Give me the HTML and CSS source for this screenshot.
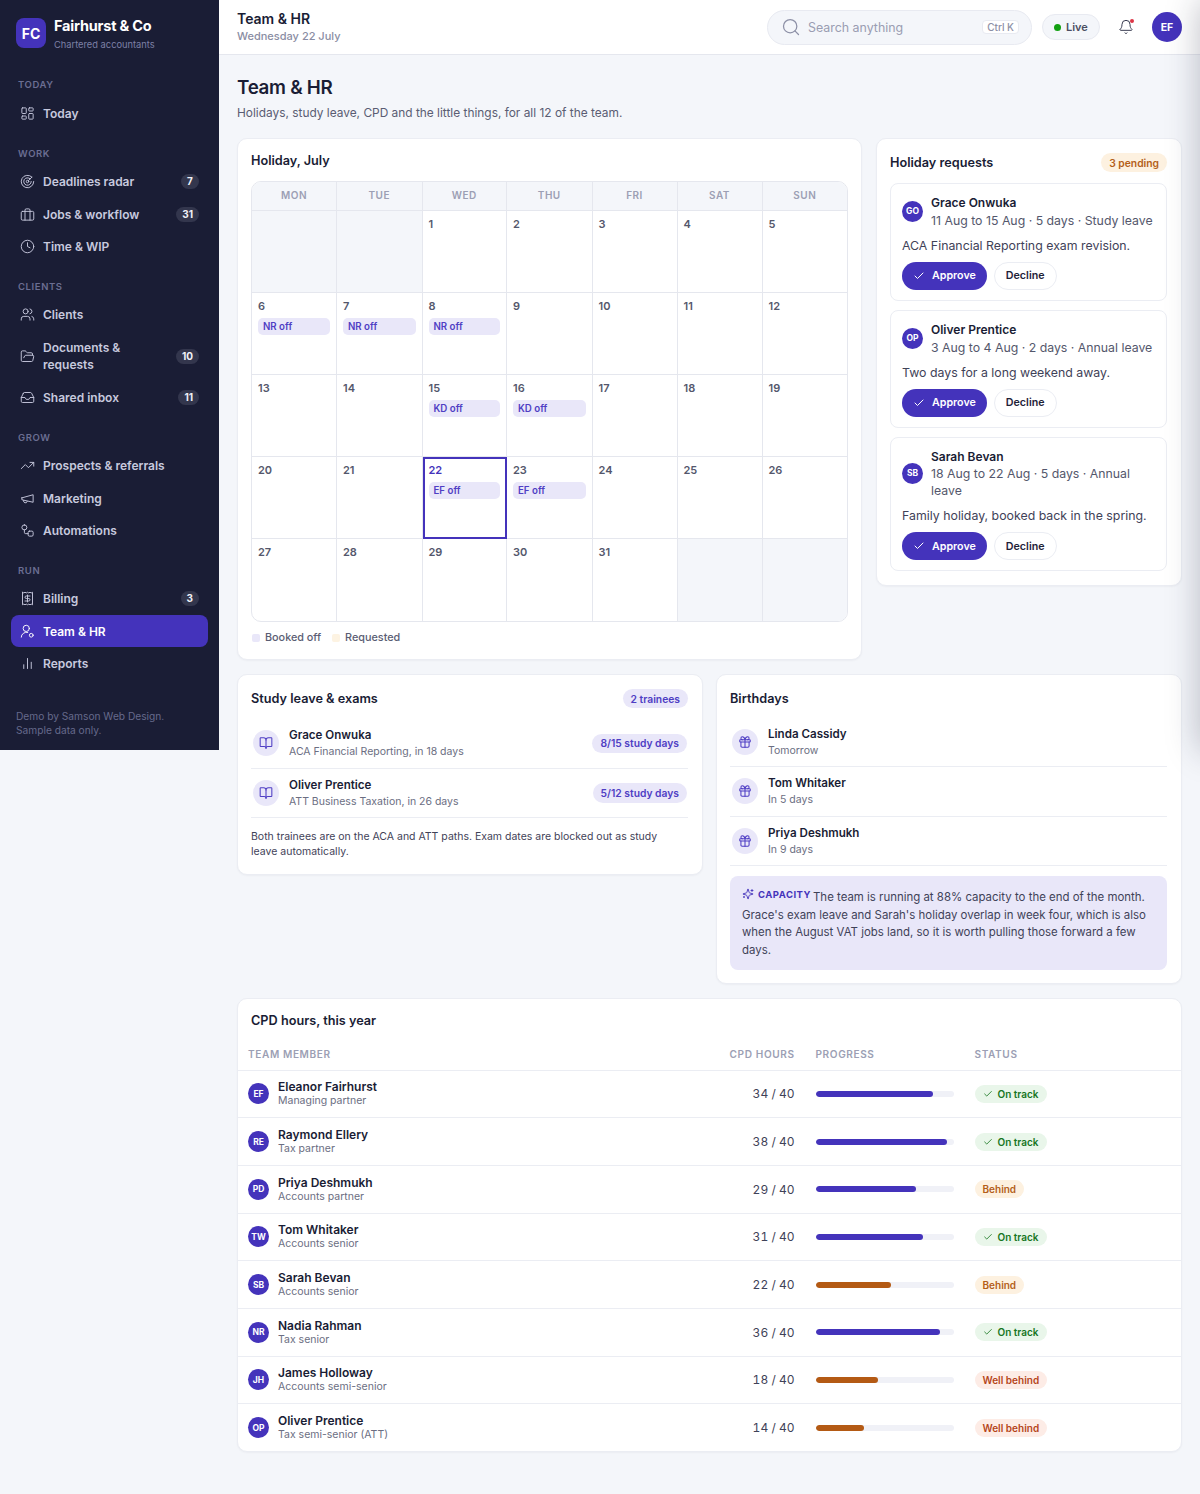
FILE: index.html
```html
<!DOCTYPE html>
<html lang="en">
<head>
<meta charset="utf-8">
<title>Team &amp; HR</title>
<link rel="stylesheet" href="styles.css">
</head>
<body>
<div class="app">
<aside class="sidebar">
  <div class="brand">
    <div class="logo">FC</div>
    <div class="brand-text"><div class="brand-name">Fairhurst &amp; Co</div><div class="brand-sub">Chartered accountants</div></div>
  </div>
  <nav class="nav">
    <div class="nav-label first">TODAY</div>
    <a class="nav-item"><svg class="ic" viewBox="0 0 24 24"><rect x="3" y="3" width="7" height="9" rx="1"/><rect x="14" y="3" width="7" height="5" rx="1"/><rect x="14" y="12" width="7" height="9" rx="1"/><rect x="3" y="16" width="7" height="5" rx="1"/></svg><span>Today</span></a>
    <div class="nav-label">WORK</div>
    <a class="nav-item"><svg class="ic" viewBox="0 0 24 24"><path d="M19.07 4.93A10 10 0 1 0 22 12"/><path d="M16.24 7.76A6 6 0 1 0 18 12"/><circle cx="12" cy="12" r="2"/><path d="M13.4 10.6 19 5"/></svg><span>Deadlines radar</span><b class="count">7</b></a>
    <a class="nav-item"><svg class="ic" viewBox="0 0 24 24"><rect x="2" y="7" width="20" height="14" rx="2"/><path d="M16 21V5a2 2 0 0 0-2-2h-4a2 2 0 0 0-2 2v16"/></svg><span>Jobs &amp; workflow</span><b class="count">31</b></a>
    <a class="nav-item"><svg class="ic" viewBox="0 0 24 24"><circle cx="12" cy="12" r="10"/><path d="M12 6v6l4 2"/></svg><span>Time &amp; WIP</span></a>
    <div class="nav-label">CLIENTS</div>
    <a class="nav-item"><svg class="ic" viewBox="0 0 24 24"><circle cx="9" cy="7" r="4"/><path d="M2 21v-2a4 4 0 0 1 4-4h6a4 4 0 0 1 4 4v2"/><path d="M16 3.1a4 4 0 0 1 0 7.8"/><path d="M22 21v-2a4 4 0 0 0-3-3.9"/></svg><span>Clients</span></a>
    <a class="nav-item tall"><svg class="ic" viewBox="0 0 24 24"><path d="m6 14 1.5-2.9A2 2 0 0 1 9.2 10H20a2 2 0 0 1 1.9 2.5l-1.5 6a2 2 0 0 1-2 1.5H4a2 2 0 0 1-2-2V5a2 2 0 0 1 2-2h3.9a2 2 0 0 1 1.7.9l.8 1.2a2 2 0 0 0 1.7.9H18a2 2 0 0 1 2 2v2"/></svg><span>Documents &amp; requests</span><b class="count">10</b></a>
    <a class="nav-item"><svg class="ic" viewBox="0 0 24 24"><path d="M22 12h-6l-2 3h-4l-2-3H2"/><path d="M5.5 5.1 2 12v6a2 2 0 0 0 2 2h16a2 2 0 0 0 2-2v-6l-3.5-6.9A2 2 0 0 0 16.8 4H7.2a2 2 0 0 0-1.7 1.1z"/></svg><span>Shared inbox</span><b class="count">11</b></a>
    <div class="nav-label">GROW</div>
    <a class="nav-item"><svg class="ic" viewBox="0 0 24 24"><path d="m22 7-8.5 8.5-5-5L2 17"/><path d="M16 7h6v6"/></svg><span>Prospects &amp; referrals</span></a>
    <a class="nav-item"><svg class="ic" viewBox="0 0 24 24"><path d="m3 11 18-5v12L3 14v-3z"/><path d="M11.6 16.8a3 3 0 1 1-5.8-1.6"/></svg><span>Marketing</span></a>
    <a class="nav-item"><svg class="ic" viewBox="0 0 24 24"><rect x="3" y="3" width="8" height="8" rx="4"/><rect x="13" y="13" width="8" height="8" rx="2"/><path d="M7 11v4a2 2 0 0 0 2 2h4"/></svg><span>Automations</span></a>
    <div class="nav-label">RUN</div>
    <a class="nav-item"><svg class="ic" viewBox="0 0 24 24"><path d="M4 2v20l2-1 2 1 2-1 2 1 2-1 2 1 2-1 2 1V2l-2 1-2-1-2 1-2-1-2 1-2-1-2 1Z"/><path d="M16 8h-6a2 2 0 1 0 0 4h4a2 2 0 1 1 0 4H8"/><path d="M12 17.5v-11"/></svg><span>Billing</span><b class="count">3</b></a>
    <a class="nav-item active"><svg class="ic" viewBox="0 0 24 24"><circle cx="10" cy="7" r="5"/><path d="M2 21a8 8 0 0 1 10.4-7.6"/><circle cx="18" cy="18" r="3"/></svg><span>Team &amp; HR</span></a>
    <a class="nav-item"><svg class="ic" viewBox="0 0 24 24"><path d="M18 20V10M12 20V4M6 20v-6"/></svg><span>Reports</span></a>
  </nav>
  <div class="demo">Demo by Samson Web Design.<br>Sample data only.</div>
</aside>
<div class="main">
  <header class="topbar">
    <div><div class="top-title">Team &amp; HR</div><div class="top-sub">Wednesday 22 July</div></div>
    <div class="top-tools">
      <div class="search"><svg class="search-ic" viewBox="0 0 24 24"><circle cx="11" cy="11" r="8"/><path d="m21 21-4.3-4.3"/></svg><span class="search-text">Search anything</span><kbd class="kbd">Ctrl K</kbd></div>
      <div class="live"><i class="dot"></i>Live</div>
      <div class="bell"><svg viewBox="0 0 24 24"><path d="M10.3 21a2 2 0 0 0 3.4 0"/><path d="M3.3 15.3A1 1 0 0 0 4 17h16a1 1 0 0 0 .7-1.7C19.4 14 18 12.5 18 8A6 6 0 0 0 6 8c0 4.5-1.4 6-2.7 7.3"/></svg><i class="bell-dot"></i></div>
      <div class="avatar big">EF</div>
    </div>
  </header>
  <main class="content">
    <h1 class="page-title">Team &amp; HR</h1>
    <p class="page-sub">Holidays, study leave, CPD and the little things, for all 12 of the team.</p>
    <div class="row-top">
      <section class="card cal-card">
        <h2 class="card-title">Holiday, July</h2>
        <div class="calendar">
          <div class="dow">MON</div><div class="dow">TUE</div><div class="dow">WED</div><div class="dow">THU</div><div class="dow">FRI</div><div class="dow">SAT</div><div class="dow">SUN</div>
          <div class="day off"></div><div class="day off"></div><div class="day">1</div><div class="day">2</div><div class="day">3</div><div class="day">4</div><div class="day">5</div>
          <div class="day">6<span class="chip">NR off</span></div><div class="day">7<span class="chip">NR off</span></div><div class="day">8<span class="chip">NR off</span></div><div class="day">9</div><div class="day">10</div><div class="day">11</div><div class="day">12</div>
          <div class="day">13</div><div class="day">14</div><div class="day">15<span class="chip">KD off</span></div><div class="day">16<span class="chip">KD off</span></div><div class="day">17</div><div class="day">18</div><div class="day">19</div>
          <div class="day">20</div><div class="day">21</div><div class="day today">22<span class="chip">EF off</span></div><div class="day">23<span class="chip">EF off</span></div><div class="day">24</div><div class="day">25</div><div class="day">26</div>
          <div class="day">27</div><div class="day">28</div><div class="day">29</div><div class="day">30</div><div class="day">31</div><div class="day off"></div><div class="day off"></div>
        </div>
        <div class="legend"><span class="leg"><i class="sw booked"></i>Booked off</span><span class="leg"><i class="sw requested"></i>Requested</span></div>
      </section>
      <section class="card req-card">
        <div class="card-head"><h2 class="card-title">Holiday requests</h2><span class="pill amber">3 pending</span></div>
        <div class="req-list">
          <div class="req">
            <div class="req-top"><div class="avatar">GO</div><div><div class="req-name">Grace Onwuka</div><div class="req-meta">11 Aug to 15 Aug · 5 days · Study leave</div></div></div>
            <p class="req-note">ACA Financial Reporting exam revision.</p>
            <div class="req-btns"><button class="btn approve"><svg viewBox="0 0 24 24"><path d="M20 6 9 17l-5-5"/></svg>Approve</button><button class="btn decline">Decline</button></div>
          </div>
          <div class="req">
            <div class="req-top"><div class="avatar">OP</div><div><div class="req-name">Oliver Prentice</div><div class="req-meta">3 Aug to 4 Aug · 2 days · Annual leave</div></div></div>
            <p class="req-note">Two days for a long weekend away.</p>
            <div class="req-btns"><button class="btn approve"><svg viewBox="0 0 24 24"><path d="M20 6 9 17l-5-5"/></svg>Approve</button><button class="btn decline">Decline</button></div>
          </div>
          <div class="req">
            <div class="req-top"><div class="avatar">SB</div><div><div class="req-name">Sarah Bevan</div><div class="req-meta">18 Aug to 22 Aug · 5 days · Annual leave</div></div></div>
            <p class="req-note">Family holiday, booked back in the spring.</p>
            <div class="req-btns"><button class="btn approve"><svg viewBox="0 0 24 24"><path d="M20 6 9 17l-5-5"/></svg>Approve</button><button class="btn decline">Decline</button></div>
          </div>
        </div>
      </section>
    </div>
    <div class="row-mid">
      <section class="card study-card">
        <div class="card-head"><h2 class="card-title">Study leave &amp; exams</h2><span class="pill violet">2 trainees</span></div>
        <div class="li">
          <div class="li-ic"><svg viewBox="0 0 24 24"><path d="M12 7v14"/><path d="M3 18a1 1 0 0 1-1-1V4a1 1 0 0 1 1-1h5a4 4 0 0 1 4 4 4 4 0 0 1 4-4h5a1 1 0 0 1 1 1v13a1 1 0 0 1-1 1h-6a3 3 0 0 0-3 3 3 3 0 0 0-3-3z"/></svg></div>
          <div class="li-body"><div class="li-name">Grace Onwuka</div><div class="li-sub">ACA Financial Reporting, in 18 days</div></div>
          <span class="pill violet">8/15 study days</span>
        </div>
        <div class="li">
          <div class="li-ic"><svg viewBox="0 0 24 24"><path d="M12 7v14"/><path d="M3 18a1 1 0 0 1-1-1V4a1 1 0 0 1 1-1h5a4 4 0 0 1 4 4 4 4 0 0 1 4-4h5a1 1 0 0 1 1 1v13a1 1 0 0 1-1 1h-6a3 3 0 0 0-3 3 3 3 0 0 0-3-3z"/></svg></div>
          <div class="li-body"><div class="li-name">Oliver Prentice</div><div class="li-sub">ATT Business Taxation, in 26 days</div></div>
          <span class="pill violet">5/12 study days</span>
        </div>
        <p class="study-note">Both trainees are on the ACA and ATT paths. Exam dates are blocked out as study leave automatically.</p>
      </section>
      <section class="card bday-card">
        <div class="card-head"><h2 class="card-title">Birthdays</h2></div>
        <div class="li">
          <div class="li-ic"><svg viewBox="0 0 24 24"><rect x="3" y="8" width="18" height="4" rx="1"/><path d="M12 8v13"/><path d="M19 12v7a2 2 0 0 1-2 2H7a2 2 0 0 1-2-2v-7"/><path d="M7.5 8a2.5 2.5 0 0 1 0-5A4.8 8 0 0 1 12 8a4.8 8 0 0 1 4.5-5 2.5 2.5 0 0 1 0 5"/></svg></div>
          <div class="li-body"><div class="li-name">Linda Cassidy</div><div class="li-sub">Tomorrow</div></div>
        </div>
        <div class="li">
          <div class="li-ic"><svg viewBox="0 0 24 24"><rect x="3" y="8" width="18" height="4" rx="1"/><path d="M12 8v13"/><path d="M19 12v7a2 2 0 0 1-2 2H7a2 2 0 0 1-2-2v-7"/><path d="M7.5 8a2.5 2.5 0 0 1 0-5A4.8 8 0 0 1 12 8a4.8 8 0 0 1 4.5-5 2.5 2.5 0 0 1 0 5"/></svg></div>
          <div class="li-body"><div class="li-name">Tom Whitaker</div><div class="li-sub">In 5 days</div></div>
        </div>
        <div class="li">
          <div class="li-ic"><svg viewBox="0 0 24 24"><rect x="3" y="8" width="18" height="4" rx="1"/><path d="M12 8v13"/><path d="M19 12v7a2 2 0 0 1-2 2H7a2 2 0 0 1-2-2v-7"/><path d="M7.5 8a2.5 2.5 0 0 1 0-5A4.8 8 0 0 1 12 8a4.8 8 0 0 1 4.5-5 2.5 2.5 0 0 1 0 5"/></svg></div>
          <div class="li-body"><div class="li-name">Priya Deshmukh</div><div class="li-sub">In 9 days</div></div>
        </div>
        <div class="insight"><span class="insight-tag"><svg viewBox="0 0 24 24"><path d="M9.9 15.5A2 2 0 0 0 8.5 14.1l-6.1-1.6a.5.5 0 0 1 0-1l6.100-1.600a2 2 0 0 0 1.400-1.400l1.600-6.100a.5.5 0 0 1 1 0l1.600 6.100a2 2 0 0 0 1.400 1.400l6.100 1.600a.5.5 0 0 1 0 1l-6.100 1.600a2 2 0 0 0-1.400 1.400l-1.600 6.100a.5.5 0 0 1-1 0z"/><path d="M20 3v4M22 5h-4M4 17v2M5 18H3"/></svg>CAPACITY</span>The team is running at 88% capacity to the end of the month. Grace's exam leave and Sarah's holiday overlap in week four, which is also when the August VAT jobs land, so it is worth pulling those forward a few days.</div>
      </section>
    </div>
    <section class="card cpd-card">
      <h2 class="card-title cpd-title">CPD hours, this year</h2>
      <table class="cpd">
        <colgroup><col class="c1"><col class="c2"><col class="c3"><col class="c4"></colgroup>
        <thead><tr><th>TEAM MEMBER</th><th class="num">CPD HOURS</th><th>PROGRESS</th><th>STATUS</th></tr></thead>
        <tbody>
          <tr><td><div class="who"><div class="avatar">EF</div><div><div class="who-name">Eleanor Fairhurst</div><div class="who-role">Managing partner</div></div></div></td><td class="num">34 / 40</td><td><div class="bar"><i style="width:85%"></i></div></td><td><span class="status ok"><svg viewBox="0 0 24 24"><path d="M20 6 9 17l-5-5"/></svg>On track</span></td></tr>
          <tr><td><div class="who"><div class="avatar">RE</div><div><div class="who-name">Raymond Ellery</div><div class="who-role">Tax partner</div></div></div></td><td class="num">38 / 40</td><td><div class="bar"><i style="width:95%"></i></div></td><td><span class="status ok"><svg viewBox="0 0 24 24"><path d="M20 6 9 17l-5-5"/></svg>On track</span></td></tr>
          <tr><td><div class="who"><div class="avatar">PD</div><div><div class="who-name">Priya Deshmukh</div><div class="who-role">Accounts partner</div></div></div></td><td class="num">29 / 40</td><td><div class="bar"><i style="width:73%"></i></div></td><td><span class="status warn">Behind</span></td></tr>
          <tr><td><div class="who"><div class="avatar">TW</div><div><div class="who-name">Tom Whitaker</div><div class="who-role">Accounts senior</div></div></div></td><td class="num">31 / 40</td><td><div class="bar"><i style="width:78%"></i></div></td><td><span class="status ok"><svg viewBox="0 0 24 24"><path d="M20 6 9 17l-5-5"/></svg>On track</span></td></tr>
          <tr><td><div class="who"><div class="avatar">SB</div><div><div class="who-name">Sarah Bevan</div><div class="who-role">Accounts senior</div></div></div></td><td class="num">22 / 40</td><td><div class="bar low"><i style="width:55%"></i></div></td><td><span class="status warn">Behind</span></td></tr>
          <tr><td><div class="who"><div class="avatar">NR</div><div><div class="who-name">Nadia Rahman</div><div class="who-role">Tax senior</div></div></div></td><td class="num">36 / 40</td><td><div class="bar"><i style="width:90%"></i></div></td><td><span class="status ok"><svg viewBox="0 0 24 24"><path d="M20 6 9 17l-5-5"/></svg>On track</span></td></tr>
          <tr><td><div class="who"><div class="avatar">JH</div><div><div class="who-name">James Holloway</div><div class="who-role">Accounts semi-senior</div></div></div></td><td class="num">18 / 40</td><td><div class="bar low"><i style="width:45%"></i></div></td><td><span class="status bad">Well behind</span></td></tr>
          <tr><td><div class="who"><div class="avatar">OP</div><div><div class="who-name">Oliver Prentice</div><div class="who-role">Tax semi-senior (ATT)</div></div></div></td><td class="num">14 / 40</td><td><div class="bar low"><i style="width:35%"></i></div></td><td><span class="status bad">Well behind</span></td></tr>
        </tbody>
      </table>
    </section>
  </main>
</div>
<div class="drawer-shadow"></div>
</div>
</body>
</html>
```
FILE: styles.css
```css
* { box-sizing: border-box; }
html, body { margin: 0; padding: 0; }
body { background: #f4f6fa; font-family: Inter, "Liberation Sans", sans-serif; color: #1a1d35; font-size: 13px; }
p, h1, h2 { margin: 0; }
svg { fill: none; stroke: currentColor; stroke-width: 2; stroke-linecap: round; stroke-linejoin: round; }

.app { position: relative; overflow: hidden; display: flex; align-items: flex-start; width: 1200px; min-height: 1494px; }
.drawer-shadow { position: absolute; left: 100%; top: 0; width: 300px; height: 750px; box-shadow: 0 0 32px rgba(26,29,53,.28); pointer-events: none; }

.sidebar { width: 219px; height: 750px; flex: none; background: #1a1d35; display: flex; flex-direction: column; padding: 18px 11px 0; }
.brand { display: flex; align-items: flex-start; gap: 8px; padding: 0 5px; height: 30px; }
.logo { width: 30px; height: 30px; border-radius: 8px; background: #4433bb; color: #fff; font-weight: 700; font-size: 14px; display: flex; align-items: center; justify-content: center; flex: none; }
.brand-name { color: #fff; font-weight: 700; font-size: 14.5px; line-height: 16px; letter-spacing: -0.2px; }
.brand-sub { color: #7d80a6; font-size: 9.3px; line-height: 15px; margin-top: 2.5px; }
.nav { display: flex; flex-direction: column; gap: 0.5px; }
.nav-label { color: #6b6e92; font-size: 9.5px; font-weight: 600; letter-spacing: 0.6px; line-height: 12px; padding: 0 7px; margin: 18px 0 5px; }
.nav-label.first { margin-top: 31px; margin-bottom: 6px; }
.nav-item { display: flex; align-items: center; height: 32px; padding: 0 9px; gap: 8px; color: #c7c9de; font-size: 12px; font-weight: 600; border-radius: 8px; }
.nav-item span { flex: 1; line-height: 17px; min-width: 0; }
.nav-item.tall { height: 50px; }
.nav-item.active { background: #4433bb; color: #fff; }
.ic { width: 15px; height: 15px; flex: none; stroke-width: 1.5; }
.count { flex: none; background: #33364d; color: #f0f1f8; font-size: 10px; font-weight: 700; line-height: 15px; padding: 0 6px; border-radius: 8px; min-width: 18px; text-align: center; }
.demo { margin-top: 29px; padding: 0 5px; color: #666a8c; font-size: 10.2px; line-height: 14.5px; }

.main { flex: 1; min-width: 0; }
.topbar { height: 55px; background: #fff; border-bottom: 1px solid #e5e7ee; display: flex; align-items: center; justify-content: space-between; padding: 0 18px; }
.top-title { font-size: 14px; font-weight: 600; line-height: 18px; }
.top-sub { font-size: 11px; color: #8a8da3; font-weight: 500; line-height: 15px; margin-top: 1px; }
.top-tools { display: flex; align-items: center; }
.search { width: 265px; height: 35px; background: #f4f6fa; border: 1px solid #e8eaf1; border-radius: 18px; display: flex; align-items: center; padding: 0 12px 0 13px; color: #9a9db2; }
.search-ic { width: 20px; height: 20px; stroke-width: 1.5; color: #8d90a6; flex: none; }
.search-text { flex: 1; margin-left: 7px; font-size: 12.4px; }
.kbd { font-family: Inter, sans-serif; font-size: 10px; font-weight: 500; background: #fff; border: 1px solid #e8eaf1; border-radius: 4px; padding: 0 4px; line-height: 12px; height: 14px; color: #8d90a6; }
.live { margin-left: 10px; height: 26px; width: 58px; background: #f4f6fa; border: 1px solid #e8eaf1; border-radius: 13px; display: flex; align-items: center; gap: 5px; padding-left: 11px; font-size: 11px; font-weight: 600; color: #4b4e63; }
.dot { width: 7px; height: 7px; border-radius: 50%; background: #12a012; }
.bell { position: relative; width: 16px; height: 16px; margin-left: 18px; color: #3a3d52; }
.bell svg { width: 16px; height: 16px; stroke-width: 1.5; display: block; }
.bell-dot { position: absolute; right: 0; top: 0; width: 4px; height: 4px; border-radius: 50%; background: #dc3545; }
.avatar { width: 21px; height: 21px; flex: none; border-radius: 50%; background: #4433bb; color: #fff; font-size: 8.5px; font-weight: 700; display: flex; align-items: center; justify-content: center; }
.avatar.big { width: 30px; height: 30px; font-size: 10.5px; margin-left: 18px; }

.content { padding: 21px 18px 42px; }
.page-title { font-size: 18.8px; font-weight: 600; line-height: 24px; letter-spacing: -0.3px; }
.page-sub { color: #5a5d73; font-size: 11.9px; line-height: 18px; margin-top: 4px; margin-bottom: 16px; }

.card { background: #fff; border: 1px solid #ebedf3; border-radius: 10px; box-shadow: 0 1px 2px rgba(26,29,53,.04); padding: 14px 14px 14px 13px; }
.card-title { font-size: 12.7px; font-weight: 600; line-height: 18px; color: #1a1d35; }
.card-head { display: flex; justify-content: space-between; align-items: center; }

.row-top { display: grid; grid-template-columns: 625px 306px; gap: 14px; align-items: start; }
.cal-card { height: 522px; padding-top: 13px; padding-right: 13px; }
.calendar { margin-top: 11px; display: grid; grid-template-columns: 85px 85.5px 84.5px 85.5px 85px 85px 1fr; border: 1px solid #e5e7ee; border-radius: 10px; overflow: hidden; height: 441px; grid-template-rows: 29px repeat(5, 82px); }
.dow { background: #f4f6fa; border-right: 1px solid #e5e7ee; border-bottom: 1px solid #e5e7ee; color: #9c9fb4; font-size: 10px; font-weight: 600; letter-spacing: 0.5px; display: flex; align-items: center; justify-content: center; padding-bottom: 2px; }
.dow:nth-child(7) { border-right: 0; }
.day { border-right: 1px solid #e5e7ee; border-bottom: 1px solid #e5e7ee; padding: 6px 6px 0; font-size: 11px; font-weight: 600; color: #54576c; line-height: 14px; position: relative; }
.day:nth-child(7n) { border-right: 0; }
.day:nth-last-child(-n+7) { border-bottom: 0; }
.day.off { background: #f4f6fa; }
.day.today { outline: 2px solid #4433bb; outline-offset: -2px; color: #4433bb; }
.chip { display: block; margin-top: 5px; height: 17px; line-height: 17px; background: #e9e7f9; color: #4f3ec4; font-size: 9.7px; font-weight: 600; border-radius: 5px; padding: 0 5px; }
.legend { display: flex; gap: 11px; margin-top: 9px; padding-left: 1px; }
.leg { display: flex; align-items: center; gap: 5px; color: #5a5d73; font-size: 10.8px; font-weight: 500; line-height: 14px; }
.sw { width: 8px; height: 8px; border-radius: 2px; }
.sw.booked { background: #e9e7f9; }
.sw.requested { background: #fdf3e2; }

.pill { display: inline-flex; align-items: center; height: 19.5px; padding: 0 8px; border-radius: 10px; font-size: 10.3px; font-weight: 600; flex: none; }
.pill.amber { background: #fdf1e0; color: #b45f1a; }
.pill.violet { background: #e9e7f9; color: #4f3ec4; }

.req-card { height: 448px; padding-top: 13px; }
.req-card .card-head { height: 21px; }
.req-list { display: flex; flex-direction: column; gap: 9px; margin-top: 10px; }
.req { border: 1px solid #ebedf3; border-radius: 8px; padding: 10px 11px; }
.req-top { display: flex; align-items: center; gap: 8px; }
.req-name { font-size: 12px; font-weight: 600; line-height: 17px; color: #1a1d35; }
.req-meta { font-size: 12.3px; line-height: 17px; color: #54576c; margin-top: 0.75px; }
.req-note { font-size: 12.35px; line-height: 17px; color: #3f4258; margin-top: 8px; }
.req-btns { display: flex; gap: 7px; margin-top: 8px; }
.btn { font-family: inherit; height: 28px; border-radius: 14px; font-size: 10.7px; font-weight: 600; display: inline-flex; align-items: center; }
.btn svg { width: 12px; height: 12px; margin-right: 7px; stroke-width: 2; }
.approve { background: #4433bb; color: #fff; border: 0; padding: 0 11px; }
.decline { background: #fff; color: #1f2238; border: 1px solid #ebedf3; padding: 0 11px; }

.row-mid { display: grid; grid-template-columns: 466px 466px; gap: 13px; align-items: start; margin-top: 14px; }
.study-card { height: 201px; }
.bday-card { height: 310px; }
.study-card .card-head { height: 19px; margin-bottom: 11px; }
.bday-card .card-head { height: 19px; margin-bottom: 9.5px; }
.li { display: flex; align-items: center; gap: 10px; border-bottom: 1px solid #ebedf3; height: 49.5px; padding-left: 2px; }
.li-ic { width: 26px; height: 26px; border-radius: 50%; background: #e9e7f9; color: #4f3ec4; display: flex; align-items: center; justify-content: center; flex: none; }
.li-ic svg { width: 14px; height: 14px; stroke-width: 1.8; }
.li-body { flex: 1; min-width: 0; }
.li-name { font-size: 11.6px; font-weight: 600; line-height: 16px; color: #1a1d35; }
.li-sub { font-size: 10.5px; line-height: 15px; color: #6b6e82; margin-top: 1px; }
.li .pill { margin-right: 1px; }
.study-note { font-size: 10.5px; line-height: 15px; color: #3f4258; margin-top: 11px; max-width: 425px; }
.insight { margin-top: 10px; background: #e9e7f9; border-radius: 8px; padding: 9.5px 12px 10px; font-size: 11.45px; line-height: 17.7px; color: #3f4258; }
.insight-tag { display: inline-flex; align-items: center; gap: 4px; color: #4433bb; font-size: 9.5px; font-weight: 700; letter-spacing: 0.5px; vertical-align: 0.5px; margin-right: 2px; }
.insight-tag svg { width: 12px; height: 12px; stroke-width: 1.8; }

.cpd-card { margin-top: 14px; padding: 13px 0 0; height: 453.5px; overflow: hidden; }
.cpd-title { padding-left: 13px; }
.cpd { width: 100%; border-collapse: collapse; table-layout: fixed; margin-top: 16px; }
.c1 { width: 481px; } .c2 { width: 86px; } .c3 { width: 159px; }
.cpd th { text-align: left; font-size: 10.1px; font-weight: 600; letter-spacing: 0.6px; color: #9c9fb4; height: 24px; padding: 0 10.5px 7px; border-bottom: 1px solid #ebedf3; white-space: nowrap; }
.cpd td { height: 47.7px; padding: 0 10.5px; border-bottom: 1px solid #ebedf3; font-size: 12px; }
.cpd th:first-child, .cpd td:first-child { padding-left: 10px; }
.cpd tr:last-child td { border-bottom: 0; }
.cpd .num { text-align: right; color: #3f4258; font-variant-numeric: tabular-nums; }
.cpd th.num { color: #9c9fb4; }
.who { display: flex; align-items: center; gap: 9px; }
.who-name { font-size: 12px; font-weight: 600; line-height: 14px; color: #1a1d35; }
.who-role { font-size: 10.5px; line-height: 13px; color: #6b6e82; }
.bar { height: 6px; background: #f0f1f7; border-radius: 3px; overflow: hidden; }
.bar i { display: block; height: 100%; background: #4433bb; border-radius: 3px; }
.bar.low i { background: #b45a14; }
.status { display: inline-flex; align-items: center; height: 18px; padding: 0 8px; border-radius: 9px; font-size: 10px; font-weight: 600; }
.status svg { width: 10px; height: 10px; margin-right: 5px; stroke-width: 2; }
.status.ok { background: #e9f6ea; color: #17761f; }
.status.warn { background: #fdf1e0; color: #b45f1a; }
.status.bad { background: #fdece6; color: #b5451a; }
```
